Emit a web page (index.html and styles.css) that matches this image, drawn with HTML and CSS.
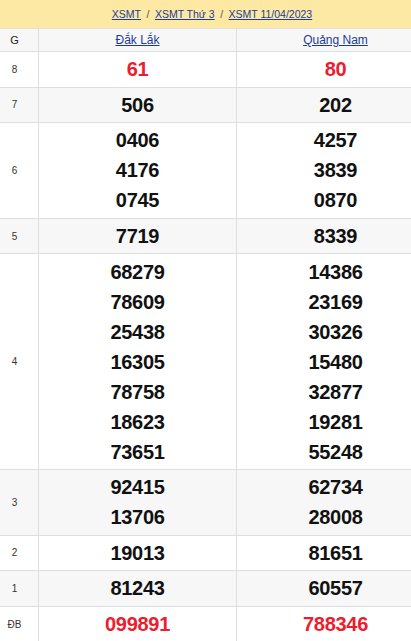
FILE: index.html
```html
<!DOCTYPE html>
<html lang="vi">
<head>
<meta charset="utf-8">
<link rel="stylesheet" href="styles.css">
</head>
<body>
<div class="page">
  <div class="crumbs">
    <a href="#">XSMT</a><span class="sep">/</span><a href="#">XSMT Thứ 3</a><span class="sep">/</span><a href="#">XSMT 11/04/2023</a>
  </div>
  <table class="results">
    <colgroup><col class="c-g"><col class="c-p"><col class="c-p"></colgroup>
    <thead>
      <tr><th class="lbl">G</th><th><a href="#">Đắk Lắk</a></th><th><a href="#">Quảng Nam</a></th></tr>
    </thead>
    <tbody>
      <tr><td class="lbl">8</td><td class="num red">61</td><td class="num red">80</td></tr>
      <tr class="alt"><td class="lbl">7</td><td class="num">506</td><td class="num">202</td></tr>
      <tr><td class="lbl">6</td><td class="num">0406<br>4176<br>0745</td><td class="num">4257<br>3839<br>0870</td></tr>
      <tr class="alt"><td class="lbl">5</td><td class="num">7719</td><td class="num">8339</td></tr>
      <tr><td class="lbl">4</td><td class="num">68279<br>78609<br>25438<br>16305<br>78758<br>18623<br>73651</td><td class="num">14386<br>23169<br>30326<br>15480<br>32877<br>19281<br>55248</td></tr>
      <tr class="alt"><td class="lbl">3</td><td class="num">92415<br>13706</td><td class="num">62734<br>28008</td></tr>
      <tr><td class="lbl">2</td><td class="num">19013</td><td class="num">81651</td></tr>
      <tr class="alt"><td class="lbl">1</td><td class="num">81243</td><td class="num">60557</td></tr>
      <tr><td class="lbl">ĐB</td><td class="num red">099891</td><td class="num red">788346</td></tr>
    </tbody>
  </table>
</div>
</body>
</html>
```
FILE: styles.css
```css
html, body {
  margin: 0;
  padding: 0;
  background: #fff;
  font-family: "Liberation Sans", Arial, sans-serif;
  color: #222;
  overflow: hidden;
}
.page {
  width: 444px;
  margin-left: -10px;
}
.crumbs {
  background: #fde9a3;
  height: 28px;
  line-height: 28px;
  font-size: 10.5px;
  text-align: center;
  color: #444;
}
.crumbs a {
  color: #1b3b9a;
  text-decoration: underline;
}
.crumbs .sep {
  margin: 0 5.5px;
  color: #555;
}
.results {
  width: 444px;
  border-collapse: collapse;
  table-layout: fixed;
  border-top: 1px solid #dedede;
}
.c-g { width: 48px; }
.c-p { width: 198px; }
.results th, .results td {
  border: 1px solid #dedede;
  text-align: center;
  padding: 0;
}
.results thead tr {
  background: #f7f7f7;
}
.results th {
  height: 22px;
  font-weight: normal;
  font-size: 12px;
  color: #222;
}
.results th a {
  color: #1b3b9a;
  text-decoration: underline;
}
.results tr.alt { background: #f7f7f7; }
.lbl {
  font-size: 10px;
  color: #333;
}
.results th.lbl { font-size: 11px; }
.results td.num {
  font-size: 20px;
  font-weight: bold;
  line-height: 30px;
  letter-spacing: -0.3px;
  padding: 2.3px 0;
  color: #111;
}
.results td.num.red { color: #ed1c2e; }
```
